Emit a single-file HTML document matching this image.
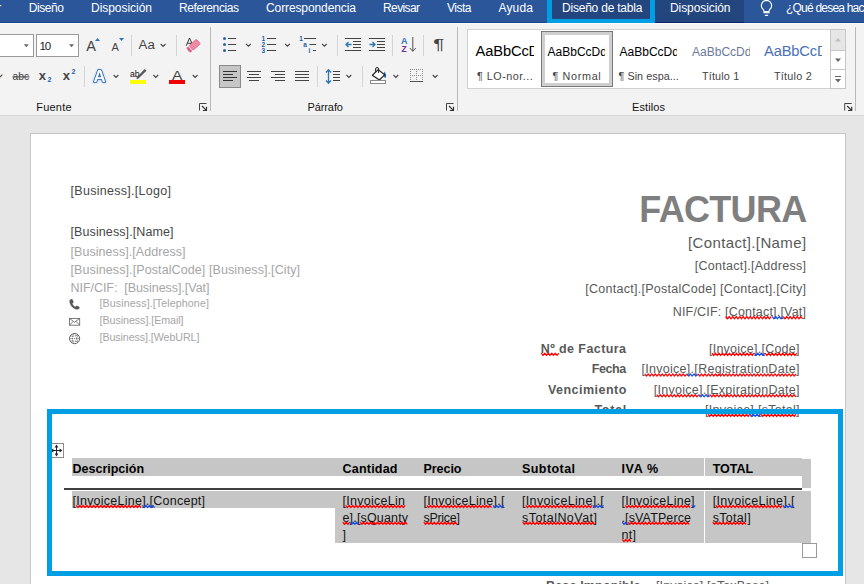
<!DOCTYPE html>
<html lang="es"><head><meta charset="utf-8"><title>Factura - Word</title>
<style>
html,body{margin:0;padding:0;}
body{width:864px;height:584px;overflow:hidden;position:relative;background:#e6e6e6;font-family:"Liberation Sans",sans-serif;}
.b{position:absolute;box-sizing:border-box;}
.t{position:absolute;white-space:pre;}
.z3{z-index:3;}
svg{position:absolute;left:0;top:0;overflow:visible;}
</style></head><body>
<!-- tab bar -->
<div class="b" style="left:0;top:0;width:864px;height:23px;background:#2b579a;border-bottom:1px solid #1d4690"></div>
<div class="b" style="left:655px;top:0;width:89px;height:23px;background:#23467f;border-bottom:1px solid #0f2468"></div>
<div class="b" style="left:547px;top:0;width:108px;height:24px;background:#23467f;border:5px solid #009fe3;border-top:none"></div>
<!-- ribbon -->
<div class="b" style="left:0;top:23px;width:864px;height:93px;background:#f3f3f3;border-bottom:1px solid #d6d6d6;border-top:1px solid #fcfcfc"></div>
<!-- font boxes -->
<div class="b" style="left:-10px;top:34px;width:44px;height:23px;background:#fff;border:1px solid #9a9a9a"></div>
<div class="b" style="left:36px;top:34px;width:43px;height:23px;background:#fff;border:1px solid #9a9a9a"></div>
<!-- styles gallery -->
<div class="b" style="left:467px;top:29px;width:379px;height:60px;background:#fff;border:1px solid #d0d0d0"></div>
<div class="b" style="left:541px;top:31px;width:72px;height:56px;background:#fff;border:1px solid #7a7a7a;box-shadow:inset 0 0 0 3px #cfcfcf"></div>
<!-- page -->
<div class="b" style="left:30px;top:133px;width:816px;height:460px;background:#fff;border:1px solid #c6c6c6"></div>
<!-- table selection -->
<div class="b" style="left:72px;top:458px;width:730px;height:18px;background:#c6c6c6"></div>
<div class="b" style="left:802px;top:459px;width:9px;height:29px;background:#c6c6c6"></div>
<div class="b" style="left:64px;top:488px;width:738px;height:2px;background:#404040;z-index:2"></div>
<div class="b" style="left:72px;top:491px;width:739px;height:17px;background:#c6c6c6"></div>
<div class="b" style="left:335px;top:491px;width:476px;height:52px;background:#c6c6c6"></div>
<div class="b" style="left:703.5px;top:458px;width:1.5px;height:85px;background:#fff;z-index:1"></div>
<!-- handles -->
<div class="b" style="left:802px;top:543px;width:15px;height:15px;background:#fff;border:1px solid #9a9a9a"></div>
<svg width="864" height="120" viewBox="0 0 864 120" style="z-index:2" font-family="Liberation Sans, sans-serif">
<defs>
<path id="chev" d="M0,0 L2.4,2.4 L4.8,0" fill="none" stroke="#444" stroke-width="1.1"/>
<path id="dd" d="M0,0 L5,0 L2.5,3 Z" fill="#666"/>
<g id="launch"><path d="M0.5,7.500 V0.5 H7.500" fill="none" stroke="#444" stroke-width="1"/><path d="M3,3 L7.400,7.400 M7.500,3.800 V7.500 H3.800" fill="none" stroke="#333" stroke-width="1.15"/></g>
</defs>
<!-- dropdown arrows in font boxes -->
<use href="#dd" x="23.8" y="44.2"/>
<use href="#dd" x="69" y="44.2"/>
<!-- grow / shrink font -->
<text x="86.2" y="50.6" font-size="14.5" fill="#444">A</text>
<path d="M95,41 L97.5,38 L100,41 Z" fill="#2e75b6"/>
<text x="111.5" y="50.6" font-size="11" fill="#444">A</text>
<path d="M119,38 L124,38 L121.5,41 Z" fill="#2e75b6"/>
<rect x="131" y="35" width="1" height="21" fill="#d4d4d4"/>
<text x="138.6" y="48.7" font-size="12" fill="#444" textLength="16.2" lengthAdjust="spacingAndGlyphs">Aa</text>
<use href="#chev" x="160.7" y="44"/>
<rect x="176" y="35" width="1" height="21" fill="#d4d4d4"/>
<!-- clear formatting -->
<path d="M186.3,45.7 L189.5,38 L191.8,43 M187.6,43.3 H191.6" fill="none" stroke="#333" stroke-width="1"/>
<g transform="rotate(-42 195 45)"><rect x="190.2" y="41.6" width="9.6" height="6" rx="1" fill="#ee8aa3" stroke="#e4577f" stroke-width="0.8"/><path d="M186.6,41.6 h2.2 v6 h-2.2 q-1,-3 0,-6z" fill="#e4577f"/></g>
<!-- group separators -->
<rect x="210" y="27" width="1" height="84" fill="#b8b8b8"/>
<rect x="457" y="27" width="1" height="84" fill="#b8b8b8"/>
<rect x="855" y="27" width="1" height="84" fill="#b8b8b8"/>
<!-- row 2 font -->
<path d="M-2.4,74.6 L0,77 L2.4,74.6" fill="none" stroke="#444" stroke-width="1.1"/>
<text x="12.6" y="79.6" font-size="10.5" fill="#444" textLength="16.6" lengthAdjust="spacingAndGlyphs">abc</text>
<rect x="12.5" y="76.4" width="17" height="1" fill="#444"/>
<text x="38.8" y="79.8" font-size="13" font-weight="700" fill="#444">x</text>
<text x="47.6" y="82.2" font-size="7" font-weight="700" fill="#2464b4">2</text>
<text x="62.8" y="79.8" font-size="13" font-weight="700" fill="#444">x</text>
<text x="71.6" y="74.4" font-size="7" font-weight="700" fill="#2464b4">2</text>
<rect x="84" y="66" width="1" height="21" fill="#d4d4d4"/>
<!-- text effects A -->
<text x="93.6" y="82" font-size="17" font-weight="700" fill="#fff" stroke="#2464b4" stroke-width="1.7" stroke-linejoin="round" textLength="12.2" lengthAdjust="spacingAndGlyphs" paint-order="stroke" style="filter:drop-shadow(0 0 1px #9cc2e5)">A</text>
<use href="#chev" x="113.6" y="75"/>
<!-- highlight -->
<text x="130" y="76.8" font-size="9.5" fill="#111" textLength="9.6" lengthAdjust="spacingAndGlyphs">ab</text>
<path d="M144.6,69 L146.4,70.8 L138.5,78.6 L136.5,79.2 L137,77.2 Z" fill="#555"/>
<rect x="130" y="80" width="16" height="4" fill="#ffff00"/>
<use href="#chev" x="153.4" y="75"/>
<!-- font color -->
<text x="171.9" y="79.5" font-size="13.5" fill="#444" textLength="10.4" lengthAdjust="spacingAndGlyphs">A</text>
<rect x="169" y="80" width="16" height="4" fill="#f00000"/>
<use href="#chev" x="192.7" y="75"/>
<use href="#launch" x="199" y="103"/>

<!-- paragraph row1 -->
<g fill="#2464b4"><circle cx="224.5" cy="38.5" r="1.5"/><circle cx="224.5" cy="44.5" r="1.5"/><circle cx="224.5" cy="50.5" r="1.5"/></g>
<path d="M228,38.5 H236 M228,44.5 H236 M228,50.5 H236" stroke="#444" stroke-width="1"/>
<use href="#chev" x="246" y="43.8"/>
<g font-size="6.5" font-weight="700" fill="#1e5aa8"><text x="261.6" y="40.8">1</text><text x="261.6" y="46.8">2</text><text x="261.6" y="52.8">3</text></g>
<path d="M267,38.5 H276 M267,44.5 H276 M267,50.5 H276" stroke="#444" stroke-width="1"/>
<use href="#chev" x="285" y="43.8"/>
<g font-size="6.5" font-weight="700" fill="#1e5aa8"><text x="299.2" y="40.8">1</text><text x="303.2" y="46.6">a</text><text x="308.6" y="52.8">i</text></g>
<path d="M304,38.5 H316 M309.5,44.5 H316 M313,50.5 H316" stroke="#444" stroke-width="1"/>
<use href="#chev" x="322" y="43.8"/>
<rect x="337" y="35" width="1" height="21" fill="#d4d4d4"/>
<!-- decrease indent -->
<path d="M345,38.5 H361 M353,41.5 H361 M353,44.5 H361 M353,47.5 H361 M345,50.5 H361" stroke="#444" stroke-width="1"/>
<path d="M351.5,44.5 H346 M348.5,42 L346,44.5 L348.5,47" fill="none" stroke="#2e75b6" stroke-width="1.3"/>
<!-- increase indent -->
<path d="M369,38.5 H385 M377,41.5 H385 M377,44.5 H385 M377,47.5 H385 M369,50.5 H385" stroke="#444" stroke-width="1"/>
<path d="M369.5,44.5 H375 M372.5,42 L375,44.5 L372.5,47" fill="none" stroke="#2e75b6" stroke-width="1.3"/>
<rect x="392" y="35" width="1" height="21" fill="#d4d4d4"/>
<!-- sort -->
<text x="401" y="44" font-size="9" font-weight="700" fill="#2e75b6">A</text>
<text x="401.5" y="52" font-size="8.5" font-weight="700" fill="#7030a0">Z</text>
<path d="M412.8,37 V51.2 M409.800,48 L412.8,51.300 L415.800,48" fill="none" stroke="#505050" stroke-width="1"/>
<rect x="423" y="35" width="1" height="21" fill="#d4d4d4"/>
<!-- pilcrow -->
<text x="433.2" y="48.8" font-size="15.5" fill="#444" textLength="11" lengthAdjust="spacingAndGlyphs">¶</text>
<!-- paragraph row2 -->
<rect x="219.5" y="65.5" width="21" height="22" fill="#c6c6c6" stroke="#8a8a8a" stroke-width="1"/>
<path d="M223,71.5 H237 M223,74.5 H233 M223,77.5 H237 M223,80.5 H233" stroke="#333" stroke-width="1"/>
<path d="M247,71.5 H261 M249,74.5 H259 M247,77.5 H261 M249,80.5 H259" stroke="#444" stroke-width="1"/>
<path d="M271,71.5 H285 M275,74.5 H285 M271,77.5 H285 M275,80.5 H285" stroke="#444" stroke-width="1"/>
<path d="M295,71.5 H309 M295,74.5 H309 M295,77.5 H309 M295,80.5 H309" stroke="#444" stroke-width="1"/>
<rect x="317" y="66" width="1" height="21" fill="#d4d4d4"/>
<path d="M328.5,70 V83 M326,72.5 L328.5,69.8 L331,72.5 M326,80.5 L328.5,83.2 L331,80.5" fill="none" stroke="#2e75b6" stroke-width="1.3"/>
<path d="M333,71.5 H340 M333,74.5 H340 M333,77.5 H340 M333,80.5 H340" stroke="#444" stroke-width="1"/>
<use href="#chev" x="346.5" y="75"/>
<rect x="362" y="66" width="1" height="21" fill="#d4d4d4"/>
<!-- shading bucket -->
<path d="M384.2,71.6 q3.2,3.400 1.200,6.600 q-2.600,-1.200 -1.200,-6.600z" fill="#2468b4"/>
<path d="M372.4,75.2 L378.2,69.6 L384.6,74.800 L379.4,80 Z" fill="#fff" stroke="#222" stroke-width="1.2" stroke-linejoin="round"/>
<path d="M378.6,73 V69 a1.500,1.500 0 0 0 -3,0 V71.800" fill="none" stroke="#222" stroke-width="1"/>
<rect x="370.5" y="80.5" width="15" height="3" fill="#fff" stroke="#8a8a8a" stroke-width="1"/>
<use href="#chev" x="393.5" y="75"/>
<!-- borders -->
<g stroke="#8a8a8a" stroke-width="1" stroke-dasharray="1 1"><path d="M410,69.5 H423 M410,75.5 H423 M410.5,69 V81 M416.5,69 V81 M422.5,69 V81"/></g><path d="M410,81.500 H423" stroke="#555" stroke-width="1"/>
<use href="#chev" x="432.7" y="75"/>
<use href="#launch" x="446" y="103"/>
<!-- styles scroll -->
<rect x="830.5" y="29.5" width="15" height="59" fill="#fff" stroke="#c6c6c6"/>
<rect x="831" y="30" width="14" height="20" fill="#e6e6e6"/>
<path d="M830.5,50.5 H845.5 M830.5,69.5 H845.5" stroke="#c6c6c6"/>
<path d="M835,41.5 L838,38 L841,41.5 Z" fill="#bdbdbd"/>
<path d="M835,58.5 L841,58.5 L838,62 Z" fill="#666"/>
<path d="M835,76.5 H841" stroke="#666"/><path d="M835,79 L841,79 L838,82.5 Z" fill="#666"/>
<use href="#launch" x="844.2" y="103"/>
<!-- light bulb -->
<path d="M766.5,0.4 a5.1,5.1 0 0 1 3.4,8.9 q-0.9,0.9 -0.9,2.2 v1.2 h-5 v-1.2 q0,-1.3 -0.9,-2.2 a5.1,5.1 0 0 1 3.4,-8.9z M764,11.6 h5 M764.9,15.4 h3.2" fill="none" stroke="#fff" stroke-width="1.15"/>
</svg>
<svg width="864" height="584" viewBox="0 0 864 584" style="z-index:3">
<!-- phone -->
<g fill="#595959" stroke="none" transform="translate(69.1 299) scale(0.9) translate(-69.6 -299)">
<path d="M71.6,299.2 c0.9,-0.5 1.6,-0.2 2,0.7 l0.9,1.9 c0.3,0.7 0.1,1.2 -0.5,1.6 l-0.8,0.5 c0.7,1.7 1.9,3 3.5,3.8 l0.6,-0.8 c0.4,-0.5 1,-0.7 1.6,-0.3 l1.7,1 c0.8,0.5 1,1.2 0.4,2 c-0.9,1.1 -2.1,1.4 -3.5,1 c-4,-1.2 -6.9,-4.6 -7.5,-8.600 c-0.200,-1.300 0.400,-2.300 1.600,-2.800z"/>
</g>
<!-- mail -->
<g fill="none" stroke="#666" stroke-width="0.85">
<rect x="69.5" y="318.4" width="10.2" height="6.8"/>
<path d="M69.5,318.4 L74.6,322.3 L79.7,318.4 M69.5,325.2 L73.2,321.3 M79.7,325.2 L76,321.3"/>
</g>
<!-- globe -->
<g fill="none" stroke="#595959" stroke-width="0.9">
<circle cx="74.6" cy="338.6" r="5.1"/>
<ellipse cx="74.6" cy="338.6" rx="2.3" ry="5.1" stroke-dasharray="1.2 1"/>
<path d="M69.5,338.6 H79.7 M70.4,336 H78.8 M70.4,341.2 H78.8" stroke-dasharray="1.2 1"/>
</g>
<!-- table move handle -->
<rect x="49.5" y="443.5" width="14" height="14" fill="#fff" stroke="#8c8c8c"/>
<path d="M56.5,446 V455 M52,450.500 H61" stroke="#222" stroke-width="1" fill="none"/>
<path d="M56.5,444.600 L58.400,447.400 H54.600 Z M56.5,456.400 L58.400,453.600 H54.600 Z M50.600,450.500 L53.400,448.600 V452.400 Z M62.400,450.500 L59.600,448.600 V452.400 Z" fill="#222"/>
</svg>

<span class="t " style="left:28.80px;top:1px;font-size:12px;line-height:14.4px;letter-spacing:-0.435px;color:#fff;">Diseño</span>
<span class="t " style="left:91.00px;top:1px;font-size:12px;line-height:14.4px;letter-spacing:-0.037px;color:#fff;">Disposición</span>
<span class="t " style="left:179.00px;top:1px;font-size:12px;line-height:14.4px;letter-spacing:-0.400px;color:#fff;">Referencias</span>
<span class="t " style="left:266.00px;top:1px;font-size:12px;line-height:14.4px;letter-spacing:-0.107px;color:#fff;">Correspondencia</span>
<span class="t " style="left:383.00px;top:1px;font-size:12px;line-height:14.4px;letter-spacing:-0.604px;color:#fff;">Revisar</span>
<span class="t " style="left:447.00px;top:1px;font-size:12px;line-height:14.4px;letter-spacing:-0.500px;color:#fff;">Vista</span>
<span class="t " style="left:498.50px;top:1px;font-size:12px;line-height:14.4px;letter-spacing:0.156px;color:#fff;">Ayuda</span>
<span class="t " style="left:562.00px;top:1px;font-size:12px;line-height:14.4px;letter-spacing:-0.214px;color:#fff;">Diseño de tabla</span>
<span class="t " style="left:670.00px;top:1px;font-size:12px;line-height:14.4px;letter-spacing:-0.087px;color:#fff;">Disposición</span>
<span class="t " style="left:-42.00px;top:1px;font-size:12px;line-height:14.4px;letter-spacing:0.382px;color:#fff;">Insertar</span>
<span class="t " style="left:786.00px;top:1px;font-size:12px;line-height:14.4px;letter-spacing:-0.788px;color:#fff;">¿Qué desea hacer?</span>
<span class="t " style="left:39.50px;top:40px;font-size:11.5px;line-height:13.8px;letter-spacing:-1.250px;color:#222;">10</span>
<span class="t " style="left:36.30px;top:101px;font-size:11px;line-height:13.2px;letter-spacing:0.190px;color:#141414;">Fuente</span>
<span class="t " style="left:307.50px;top:101px;font-size:11px;line-height:13.2px;letter-spacing:-0.104px;color:#141414;">Párrafo</span>
<span class="t " style="left:632.00px;top:101px;font-size:11px;line-height:13.2px;letter-spacing:0.104px;color:#141414;">Estilos</span>
<div class="b" style="left:0;top:0;width:534px;height:120px;overflow:hidden"><span class="t " style="left:475.60px;top:43px;font-size:14.7px;line-height:17.64px;letter-spacing:-0.145px;color:#000;">AaBbCcDd</span></div>
<span class="t " style="left:477.00px;top:70px;font-size:10.8px;line-height:12.96px;letter-spacing:0.487px;color:#444;">¶ LO-nor...</span>
<div class="b" style="left:0;top:0;width:605.3px;height:120px;overflow:hidden"><span class="t " style="left:547.50px;top:45px;font-size:12px;line-height:14.4px;letter-spacing:0.008px;color:#000;">AaBbCcDd</span></div>
<span class="t " style="left:552.50px;top:70px;font-size:10.8px;line-height:12.96px;letter-spacing:0.661px;color:#444;">¶ Normal</span>
<div class="b" style="left:0;top:0;width:677.3px;height:120px;overflow:hidden"><span class="t " style="left:619.50px;top:45px;font-size:12px;line-height:14.4px;letter-spacing:0.008px;color:#000;">AaBbCcDd</span></div>
<span class="t " style="left:618.50px;top:70px;font-size:10.8px;line-height:12.96px;letter-spacing:0.042px;color:#444;">¶ Sin espa...</span>
<div class="b" style="left:0;top:0;width:749.6px;height:120px;overflow:hidden"><span class="t " style="left:692.00px;top:45px;font-size:12px;line-height:14.4px;letter-spacing:0.008px;color:#6b7a99;">AaBbCcDd</span></div>
<span class="t " style="left:702.00px;top:70px;font-size:10.8px;line-height:12.96px;letter-spacing:0.161px;color:#444;">Título 1</span>
<div class="b" style="left:0;top:0;width:822px;height:120px;overflow:hidden"><span class="t " style="left:764.00px;top:43px;font-size:14.7px;line-height:17.64px;letter-spacing:-0.145px;color:#4a70b8;">AaBbCcDd</span></div>
<span class="t " style="left:774.00px;top:70px;font-size:10.8px;line-height:12.96px;letter-spacing:0.232px;color:#444;">Título 2</span>
<span class="t " style="left:70.50px;top:184px;font-size:12.5px;line-height:15.0px;letter-spacing:0.289px;color:#474747;">[Business].[Logo]</span>
<span class="t " style="left:70.50px;top:225px;font-size:12.5px;line-height:15.0px;letter-spacing:0.102px;color:#474747;">[Business].[Name]</span>
<span class="t " style="left:70.50px;top:245px;font-size:12.5px;line-height:15.0px;letter-spacing:0.059px;color:#a6a6a6;">[Business].[Address]</span>
<span class="t " style="left:70.50px;top:263px;font-size:12.5px;line-height:15.0px;letter-spacing:0.094px;color:#a6a6a6;">[Business].[PostalCode] [Business].[City]</span>
<span class="t " style="left:70.50px;top:281px;font-size:12.5px;line-height:15.0px;letter-spacing:-0.045px;color:#a6a6a6;">NIF/CIF:  [Business].[Vat]</span>
<span class="t " style="left:99.50px;top:297px;font-size:10.7px;line-height:12.84px;letter-spacing:0.089px;color:#a6a6a6;">[Business].[Telephone]</span>
<span class="t " style="left:99.50px;top:314px;font-size:10.7px;line-height:12.84px;letter-spacing:-0.051px;color:#a6a6a6;">[Business].[Email]</span>
<span class="t " style="left:99.50px;top:331px;font-size:10.7px;line-height:12.84px;letter-spacing:-0.083px;color:#a6a6a6;">[Business].[WebURL]</span>
<span class="t " style="left:639.30px;top:188px;font-size:36px;line-height:43.2px;letter-spacing:-0.667px;color:#7f7f7f;font-weight:700;">FACTURA</span>
<span class="t " style="left:688.00px;top:234px;font-size:15px;line-height:18.0px;letter-spacing:0.367px;color:#595959;">[Contact].[Name]</span>
<span class="t " style="left:694.70px;top:259px;font-size:12.5px;line-height:15.0px;letter-spacing:0.281px;color:#595959;">[Contact].[Address]</span>
<span class="t " style="left:585.30px;top:282px;font-size:12.5px;line-height:15.0px;letter-spacing:0.268px;color:#595959;">[Contact].[PostalCode] [Contact].[City]</span>
<span class="t " style="left:672.70px;top:305px;font-size:12.5px;line-height:15.0px;letter-spacing:0.187px;color:#595959;">NIF/CIF: [Contact].[Vat]</span>
<span class="t " style="left:540.70px;top:342px;font-size:12.5px;line-height:15.0px;letter-spacing:0.425px;color:#595959;font-weight:700;">Nº de Factura</span>
<span class="t " style="left:709.00px;top:342px;font-size:12.5px;line-height:15.0px;letter-spacing:0.242px;color:#595959;">[Invoice].[Code]</span>
<span class="t " style="left:591.70px;top:362px;font-size:12.5px;line-height:15.0px;letter-spacing:-0.413px;color:#595959;font-weight:700;">Fecha</span>
<span class="t " style="left:641.40px;top:362px;font-size:12.5px;line-height:15.0px;letter-spacing:0.295px;color:#595959;">[Invoice].[RegistrationDate]</span>
<span class="t " style="left:547.90px;top:383px;font-size:12.5px;line-height:15.0px;letter-spacing:0.477px;color:#595959;font-weight:700;">Vencimiento</span>
<span class="t " style="left:653.80px;top:383px;font-size:12.5px;line-height:15.0px;letter-spacing:0.268px;color:#595959;">[Invoice].[ExpirationDate]</span>
<span class="t " style="left:594.40px;top:403px;font-size:12.5px;line-height:15.0px;letter-spacing:0.756px;color:#595959;font-weight:700;">Total</span>
<span class="t " style="left:705.00px;top:403px;font-size:12.5px;line-height:15.0px;letter-spacing:0.287px;color:#595959;">[Invoice].[sTotal]</span>
<span class="t z3" style="left:72.50px;top:462px;font-size:12.5px;line-height:15.0px;letter-spacing:0.000px;color:#000;font-weight:700;">Descripción</span>
<span class="t z3" style="left:342.50px;top:462px;font-size:12.5px;line-height:15.0px;letter-spacing:0.214px;color:#000;font-weight:700;">Cantidad</span>
<span class="t z3" style="left:423.50px;top:462px;font-size:12.5px;line-height:15.0px;letter-spacing:-0.050px;color:#000;font-weight:700;">Precio</span>
<span class="t z3" style="left:522.00px;top:462px;font-size:12.5px;line-height:15.0px;letter-spacing:0.429px;color:#000;font-weight:700;">Subtotal</span>
<span class="t z3" style="left:621.50px;top:462px;font-size:12.5px;line-height:15.0px;letter-spacing:0.625px;color:#000;font-weight:700;">IVA %</span>
<span class="t z3" style="left:712.70px;top:462px;font-size:12.5px;line-height:15.0px;letter-spacing:0.000px;color:#000;font-weight:700;">TOTAL</span>
<span class="t z3" style="left:72.50px;top:494px;font-size:12.5px;line-height:15.0px;letter-spacing:0.244px;color:#141414;">[InvoiceLine].[Concept]</span>
<span class="t z3" style="left:342.50px;top:494px;font-size:12.5px;line-height:15.0px;letter-spacing:0.275px;color:#141414;">[InvoiceLin</span>
<span class="t z3" style="left:342.50px;top:511px;font-size:12.5px;line-height:15.0px;letter-spacing:0.163px;color:#141414;">e].[sQuanty</span>
<span class="t z3" style="left:342.50px;top:528px;font-size:12.5px;line-height:15.0px;letter-spacing:0.000px;color:#141414;">]</span>
<span class="t z3" style="left:423.50px;top:494px;font-size:12.5px;line-height:15.0px;letter-spacing:0.277px;color:#141414;">[InvoiceLine].[</span>
<span class="t z3" style="left:423.50px;top:511px;font-size:12.5px;line-height:15.0px;letter-spacing:-0.292px;color:#141414;">sPrice]</span>
<span class="t z3" style="left:522.00px;top:494px;font-size:12.5px;line-height:15.0px;letter-spacing:0.330px;color:#141414;">[InvoiceLine].[</span>
<span class="t z3" style="left:522.00px;top:511px;font-size:12.5px;line-height:15.0px;letter-spacing:0.455px;color:#141414;">sTotalNoVat]</span>
<span class="t z3" style="left:621.50px;top:494px;font-size:12.5px;line-height:15.0px;letter-spacing:0.240px;color:#141414;">[InvoiceLine]</span>
<span class="t z3" style="left:621.50px;top:511px;font-size:12.5px;line-height:15.0px;letter-spacing:0.125px;color:#141414;">.[sVATPerce</span>
<span class="t z3" style="left:621.50px;top:528px;font-size:12.5px;line-height:15.0px;letter-spacing:0.312px;color:#141414;">nt]</span>
<span class="t z3" style="left:712.70px;top:494px;font-size:12.5px;line-height:15.0px;letter-spacing:0.334px;color:#141414;">[InvoiceLine].[</span>
<span class="t z3" style="left:712.70px;top:511px;font-size:12.5px;line-height:15.0px;letter-spacing:0.312px;color:#141414;">sTotal]</span>
<span class="t " style="left:546.00px;top:579px;font-size:12.5px;line-height:15.0px;letter-spacing:0.163px;color:#595959;font-weight:700;">Base Imponible</span>
<span class="t " style="left:656.00px;top:579px;font-size:12.5px;line-height:15.0px;letter-spacing:0.099px;color:#595959;">[Invoice].[sTaxBase]</span>
<svg width="864" height="584" viewBox="0 0 864 584" style="z-index:4">
<polyline points="725.7,316.5 727.5,318.8 729.2,316.5 731.0,318.8 732.7,316.5 734.5,318.8 736.2,316.5 738.0,318.8 739.7,316.5 741.5,318.8 743.2,316.5 745.0,318.8 746.7,316.5 748.5,318.8 750.2,316.5 752.0,318.8 753.7,316.5 755.5,318.8 757.2,316.5 759.0,318.8 760.7,316.5 762.5,318.8 764.2,316.5 766.0,318.8 767.7,316.5 769.5,318.8 771.2,316.5" fill="none" stroke="#f00" stroke-width="1.25" stroke-linejoin="round"/>
<polyline points="772.2,316.5 774.0,318.8 775.7,316.5 777.5,318.8 779.2,316.5 781.0,318.8 782.7,316.5" fill="none" stroke="#1f4fe0" stroke-width="1.25" stroke-linejoin="round"/>
<polyline points="783.3,316.5 785.0,318.8 786.8,316.5 788.5,318.8 790.3,316.5 792.0,318.8 793.8,316.5 795.5,318.8 797.3,316.5 799.0,318.8 800.8,316.5 802.5,318.8" fill="none" stroke="#f00" stroke-width="1.25" stroke-linejoin="round"/>
<polyline points="541.3,353.2 543.0,355.4 544.8,353.2 546.5,355.4 548.3,353.2 550.0,355.4 551.8,353.2 553.5,355.4 555.3,353.2 557.0,355.4 558.8,353.2" fill="none" stroke="#f00" stroke-width="1.25" stroke-linejoin="round"/>
<polyline points="712.0,353.2 713.8,355.5 715.5,353.2 717.2,355.5 719.0,353.2 720.8,355.5 722.5,353.2 724.2,355.5 726.0,353.2 727.8,355.5 729.5,353.2 731.2,355.5 733.0,353.2 734.8,355.5 736.5,353.2 738.2,355.5 740.0,353.2 741.8,355.5 743.5,353.2 745.2,355.5 747.0,353.2 748.8,355.5 750.5,353.2 752.2,355.5 754.0,353.2" fill="none" stroke="#f00" stroke-width="1.25" stroke-linejoin="round"/>
<polyline points="754.3,353.2 756.0,355.5 757.8,353.2 759.5,355.5 761.3,353.2 763.0,355.5 764.8,353.2" fill="none" stroke="#1f4fe0" stroke-width="1.25" stroke-linejoin="round"/>
<polyline points="765.2,353.2 767.0,355.5 768.7,353.2 770.5,355.5 772.2,353.2 774.0,355.5 775.7,353.2 777.5,355.5 779.2,353.2 781.0,355.5 782.7,353.2 784.5,355.5 786.2,353.2 788.0,355.5 789.7,353.2 791.5,355.5 793.2,353.2 795.0,355.5 796.7,353.2" fill="none" stroke="#f00" stroke-width="1.25" stroke-linejoin="round"/>
<polyline points="644.8,373.9 646.5,376.1 648.2,373.9 650.0,376.1 651.8,373.9 653.5,376.1 655.2,373.9 657.0,376.1 658.8,373.9 660.5,376.1 662.2,373.9 664.0,376.1 665.8,373.9 667.5,376.1 669.2,373.9 671.0,376.1 672.8,373.9 674.5,376.1 676.2,373.9 678.0,376.1 679.8,373.9 681.5,376.1 683.2,373.9 685.0,376.1 686.8,373.9" fill="none" stroke="#f00" stroke-width="1.25" stroke-linejoin="round"/>
<polyline points="687.0,373.9 688.8,376.1 690.5,373.9 692.2,376.1 694.0,373.9 695.8,376.1 697.5,373.9" fill="none" stroke="#1f4fe0" stroke-width="1.25" stroke-linejoin="round"/>
<polyline points="698.0,373.9 699.8,376.1 701.5,373.9 703.2,376.1 705.0,373.9 706.8,376.1 708.5,373.9 710.2,376.1 712.0,373.9 713.8,376.1 715.5,373.9 717.2,376.1 719.0,373.9 720.8,376.1 722.5,373.9 724.2,376.1 726.0,373.9 727.8,376.1 729.5,373.9 731.2,376.1 733.0,373.9 734.8,376.1 736.5,373.9 738.2,376.1 740.0,373.9 741.8,376.1 743.5,373.9 745.2,376.1 747.0,373.9 748.8,376.1 750.5,373.9 752.2,376.1 754.0,373.9 755.8,376.1 757.5,373.9 759.2,376.1 761.0,373.9 762.8,376.1 764.5,373.9 766.2,376.1 768.0,373.9 769.8,376.1 771.5,373.9 773.2,376.1 775.0,373.9 776.8,376.1 778.5,373.9 780.2,376.1 782.0,373.9 783.8,376.1 785.5,373.9 787.2,376.1 789.0,373.9 790.8,376.1 792.5,373.9 794.2,376.1 796.0,373.9" fill="none" stroke="#f00" stroke-width="1.25" stroke-linejoin="round"/>
<polyline points="656.8,394.6 658.5,396.8 660.3,394.6 662.0,396.8 663.8,394.6 665.5,396.8 667.3,394.6 669.0,396.8 670.8,394.6 672.5,396.8 674.3,394.6 676.0,396.8 677.8,394.6 679.5,396.8 681.3,394.6 683.0,396.8 684.8,394.6 686.5,396.8 688.3,394.6 690.0,396.8 691.8,394.6 693.5,396.8 695.3,394.6 697.0,396.8 698.8,394.6" fill="none" stroke="#f00" stroke-width="1.25" stroke-linejoin="round"/>
<polyline points="699.0,394.6 700.8,396.8 702.5,394.6 704.2,396.8 706.0,394.6 707.8,396.8 709.5,394.6" fill="none" stroke="#1f4fe0" stroke-width="1.25" stroke-linejoin="round"/>
<polyline points="710.0,394.6 711.8,396.8 713.5,394.6 715.2,396.8 717.0,394.6 718.8,396.8 720.5,394.6 722.2,396.8 724.0,394.6 725.8,396.8 727.5,394.6 729.2,396.8 731.0,394.6 732.8,396.8 734.5,394.6 736.2,396.8 738.0,394.6 739.8,396.8 741.5,394.6 743.2,396.8 745.0,394.6 746.8,396.8 748.5,394.6 750.2,396.8 752.0,394.6 753.8,396.8 755.5,394.6 757.2,396.8 759.0,394.6 760.8,396.8 762.5,394.6 764.2,396.8 766.0,394.6 767.8,396.8 769.5,394.6 771.2,396.8 773.0,394.6 774.8,396.8 776.5,394.6 778.2,396.8 780.0,394.6 781.8,396.8 783.5,394.6 785.2,396.8 787.0,394.6 788.8,396.8 790.5,394.6 792.2,396.8 794.0,394.6 795.8,396.8" fill="none" stroke="#f00" stroke-width="1.25" stroke-linejoin="round"/>
<polyline points="707.9,414.2 709.6,416.5 711.4,414.2 713.1,416.5 714.9,414.2 716.6,416.5 718.4,414.2 720.1,416.5 721.9,414.2 723.6,416.5 725.4,414.2 727.1,416.5 728.9,414.2 730.6,416.5 732.4,414.2 734.1,416.5 735.9,414.2 737.6,416.5 739.4,414.2 741.1,416.5 742.9,414.2 744.6,416.5 746.4,414.2 748.1,416.5 749.9,414.2" fill="none" stroke="#f00" stroke-width="1.25" stroke-linejoin="round"/>
<polyline points="750.0,414.2 751.8,416.5 753.5,414.2 755.2,416.5 757.0,414.2 758.8,416.5 760.5,414.2" fill="none" stroke="#1f4fe0" stroke-width="1.25" stroke-linejoin="round"/>
<polyline points="761.0,414.2 762.8,416.5 764.5,414.2 766.2,416.5 768.0,414.2 769.8,416.5 771.5,414.2 773.2,416.5 775.0,414.2 776.8,416.5 778.5,414.2 780.2,416.5 782.0,414.2 783.8,416.5 785.5,414.2 787.2,416.5 789.0,414.2 790.8,416.5 792.5,414.2 794.2,416.5 796.0,414.2" fill="none" stroke="#f00" stroke-width="1.25" stroke-linejoin="round"/>
<polyline points="76.2,505.4 78.0,507.6 79.8,505.4 81.5,507.6 83.2,505.4 85.0,507.6 86.8,505.4 88.5,507.6 90.2,505.4 92.0,507.6 93.8,505.4 95.5,507.6 97.2,505.4 99.0,507.6 100.8,505.4 102.5,507.6 104.2,505.4 106.0,507.6 107.8,505.4 109.5,507.6 111.2,505.4 113.0,507.6 114.8,505.4 116.5,507.6 118.2,505.4 120.0,507.6 121.8,505.4 123.5,507.6 125.2,505.4 127.0,507.6 128.8,505.4 130.5,507.6 132.2,505.4 134.0,507.6 135.8,505.4 137.5,507.6 139.2,505.4 141.0,507.6" fill="none" stroke="#f00" stroke-width="1.25" stroke-linejoin="round"/>
<polyline points="142.3,505.4 144.1,507.6 145.8,505.4 147.6,507.6 149.3,505.4 151.1,507.6 152.8,505.4 154.6,507.6" fill="none" stroke="#1f4fe0" stroke-width="1.25" stroke-linejoin="round"/>
<polyline points="345.7,505.4 347.4,507.6 349.2,505.4 350.9,507.6 352.7,505.4 354.4,507.6 356.2,505.4 357.9,507.6 359.7,505.4 361.4,507.6 363.2,505.4 364.9,507.6 366.7,505.4 368.4,507.6 370.2,505.4 371.9,507.6 373.7,505.4 375.4,507.6 377.2,505.4 378.9,507.6 380.7,505.4 382.4,507.6 384.2,505.4 385.9,507.6 387.7,505.4 389.4,507.6 391.2,505.4 392.9,507.6 394.7,505.4 396.4,507.6 398.2,505.4 399.9,507.6 401.7,505.4 403.4,507.6 405.2,505.4" fill="none" stroke="#f00" stroke-width="1.25" stroke-linejoin="round"/>
<polyline points="342.7,522.1 344.4,524.4 346.2,522.1 347.9,524.4 349.7,522.1" fill="none" stroke="#f00" stroke-width="1.25" stroke-linejoin="round"/>
<polyline points="349.7,522.1 351.4,524.4 353.2,522.1 354.9,524.4 356.7,522.1 358.4,524.4" fill="none" stroke="#1f4fe0" stroke-width="1.25" stroke-linejoin="round"/>
<polyline points="360.0,522.1 361.8,524.4 363.5,522.1 365.2,524.4 367.0,522.1 368.8,524.4 370.5,522.1 372.2,524.4 374.0,522.1 375.8,524.4 377.5,522.1 379.2,524.4 381.0,522.1 382.8,524.4 384.5,522.1 386.2,524.4 388.0,522.1 389.8,524.4 391.5,522.1 393.2,524.4 395.0,522.1 396.8,524.4 398.5,522.1 400.2,524.4 402.0,522.1 403.8,524.4 405.5,522.1 407.2,524.4" fill="none" stroke="#f00" stroke-width="1.25" stroke-linejoin="round"/>
<polyline points="426.8,505.4 428.6,507.6 430.3,505.4 432.1,507.6 433.8,505.4 435.6,507.6 437.3,505.4 439.1,507.6 440.8,505.4 442.6,507.6 444.3,505.4 446.1,507.6 447.8,505.4 449.6,507.6 451.3,505.4 453.1,507.6 454.8,505.4 456.6,507.6 458.3,505.4 460.1,507.6 461.8,505.4 463.6,507.6 465.3,505.4 467.1,507.6 468.8,505.4 470.6,507.6 472.3,505.4 474.1,507.6 475.8,505.4 477.6,507.6 479.3,505.4 481.1,507.6 482.8,505.4 484.6,507.6 486.3,505.4 488.1,507.6 489.8,505.4 491.6,507.6" fill="none" stroke="#f00" stroke-width="1.25" stroke-linejoin="round"/>
<polyline points="493.2,505.4 494.9,507.6 496.7,505.4 498.4,507.6 500.2,505.4 501.9,507.6 503.7,505.4" fill="none" stroke="#1f4fe0" stroke-width="1.25" stroke-linejoin="round"/>
<polyline points="423.8,522.1 425.5,524.4 427.2,522.1 429.0,524.4 430.8,522.1 432.5,524.4 434.2,522.1 436.0,524.4 437.8,522.1 439.5,524.4 441.2,522.1 443.0,524.4 444.8,522.1 446.5,524.4 448.2,522.1 450.0,524.4 451.8,522.1 453.5,524.4 455.2,522.1 457.0,524.4" fill="none" stroke="#f00" stroke-width="1.25" stroke-linejoin="round"/>
<polyline points="525.7,505.4 527.5,507.6 529.2,505.4 531.0,507.6 532.7,505.4 534.5,507.6 536.2,505.4 538.0,507.6 539.7,505.4 541.5,507.6 543.2,505.4 545.0,507.6 546.7,505.4 548.5,507.6 550.2,505.4 552.0,507.6 553.7,505.4 555.5,507.6 557.2,505.4 559.0,507.6 560.7,505.4 562.5,507.6 564.2,505.4 566.0,507.6 567.7,505.4 569.5,507.6 571.2,505.4 573.0,507.6 574.7,505.4 576.5,507.6 578.2,505.4 580.0,507.6 581.7,505.4 583.5,507.6 585.2,505.4 587.0,507.6 588.7,505.4 590.5,507.6 592.2,505.4" fill="none" stroke="#f00" stroke-width="1.25" stroke-linejoin="round"/>
<polyline points="592.9,505.4 594.6,507.6 596.4,505.4 598.1,507.6 599.9,505.4 601.6,507.6 603.4,505.4" fill="none" stroke="#1f4fe0" stroke-width="1.25" stroke-linejoin="round"/>
<polyline points="522.7,522.1 524.5,524.4 526.2,522.1 528.0,524.4 529.7,522.1 531.5,524.4 533.2,522.1 535.0,524.4 536.7,522.1 538.5,524.4 540.2,522.1 542.0,524.4 543.7,522.1 545.5,524.4 547.2,522.1 549.0,524.4 550.7,522.1 552.5,524.4 554.2,522.1 556.0,524.4 557.7,522.1 559.5,524.4 561.2,522.1 563.0,524.4 564.7,522.1 566.5,524.4 568.2,522.1 570.0,524.4 571.7,522.1 573.5,524.4 575.2,522.1 577.0,524.4 578.7,522.1 580.5,524.4 582.2,522.1 584.0,524.4 585.7,522.1 587.5,524.4 589.2,522.1 591.0,524.4 592.7,522.1 594.5,524.4" fill="none" stroke="#f00" stroke-width="1.25" stroke-linejoin="round"/>
<polyline points="625.3,505.4 627.0,507.6 628.8,505.4 630.5,507.6 632.3,505.4 634.0,507.6 635.8,505.4 637.5,507.6 639.3,505.4 641.0,507.6 642.8,505.4 644.5,507.6 646.3,505.4 648.0,507.6 649.8,505.4 651.5,507.6 653.3,505.4 655.0,507.6 656.8,505.4 658.5,507.6 660.3,505.4 662.0,507.6 663.8,505.4 665.5,507.6 667.3,505.4 669.0,507.6 670.8,505.4 672.5,507.6 674.3,505.4 676.0,507.6 677.8,505.4 679.5,507.6 681.3,505.4 683.0,507.6 684.8,505.4 686.5,507.6 688.3,505.4 690.0,507.6" fill="none" stroke="#f00" stroke-width="1.25" stroke-linejoin="round"/>
<polyline points="691.7,505.4 693.5,507.6 695.2,505.4" fill="none" stroke="#1f4fe0" stroke-width="1.25" stroke-linejoin="round"/>
<polyline points="622.3,522.1 624.0,524.4 625.8,522.1 627.5,524.4" fill="none" stroke="#1f4fe0" stroke-width="1.25" stroke-linejoin="round"/>
<polyline points="628.0,522.1 629.8,524.4 631.5,522.1 633.2,524.4 635.0,522.1 636.8,524.4 638.5,522.1 640.2,524.4 642.0,522.1 643.8,524.4 645.5,522.1 647.2,524.4 649.0,522.1 650.8,524.4 652.5,522.1 654.2,524.4 656.0,522.1 657.8,524.4 659.5,522.1 661.2,524.4 663.0,522.1 664.8,524.4 666.5,522.1 668.2,524.4 670.0,522.1 671.8,524.4 673.5,522.1 675.2,524.4 677.0,522.1 678.8,524.4 680.5,522.1 682.2,524.4 684.0,522.1 685.8,524.4 687.5,522.1 689.2,524.4" fill="none" stroke="#f00" stroke-width="1.25" stroke-linejoin="round"/>
<polyline points="622.3,539.4 624.0,541.6 625.8,539.4 627.5,541.6 629.3,539.4 631.0,541.6" fill="none" stroke="#f00" stroke-width="1.25" stroke-linejoin="round"/>
<polyline points="715.7,505.4 717.5,507.6 719.2,505.4 721.0,507.6 722.7,505.4 724.5,507.6 726.2,505.4 728.0,507.6 729.7,505.4 731.5,507.6 733.2,505.4 735.0,507.6 736.7,505.4 738.5,507.6 740.2,505.4 742.0,507.6 743.7,505.4 745.5,507.6 747.2,505.4 749.0,507.6 750.7,505.4 752.5,507.6 754.2,505.4 756.0,507.6 757.7,505.4 759.5,507.6 761.2,505.4 763.0,507.6 764.7,505.4 766.5,507.6 768.2,505.4 770.0,507.6 771.7,505.4 773.5,507.6 775.2,505.4 777.0,507.6 778.7,505.4 780.5,507.6 782.2,505.4" fill="none" stroke="#f00" stroke-width="1.25" stroke-linejoin="round"/>
<polyline points="783.0,505.4 784.8,507.6 786.5,505.4 788.2,507.6 790.0,505.4 791.8,507.6 793.5,505.4" fill="none" stroke="#1f4fe0" stroke-width="1.25" stroke-linejoin="round"/>
<polyline points="712.7,522.1 714.5,524.4 716.2,522.1 718.0,524.4 719.7,522.1 721.5,524.4 723.2,522.1 725.0,524.4 726.7,522.1 728.5,524.4 730.2,522.1 732.0,524.4 733.7,522.1 735.5,524.4 737.2,522.1 739.0,524.4 740.7,522.1 742.5,524.4 744.2,522.1 746.0,524.4" fill="none" stroke="#f00" stroke-width="1.25" stroke-linejoin="round"/>
</svg>
<div class="b" style="left:47px;top:409px;width:796px;height:167px;border:5px solid #009fe3;z-index:5"></div>
</body></html>
